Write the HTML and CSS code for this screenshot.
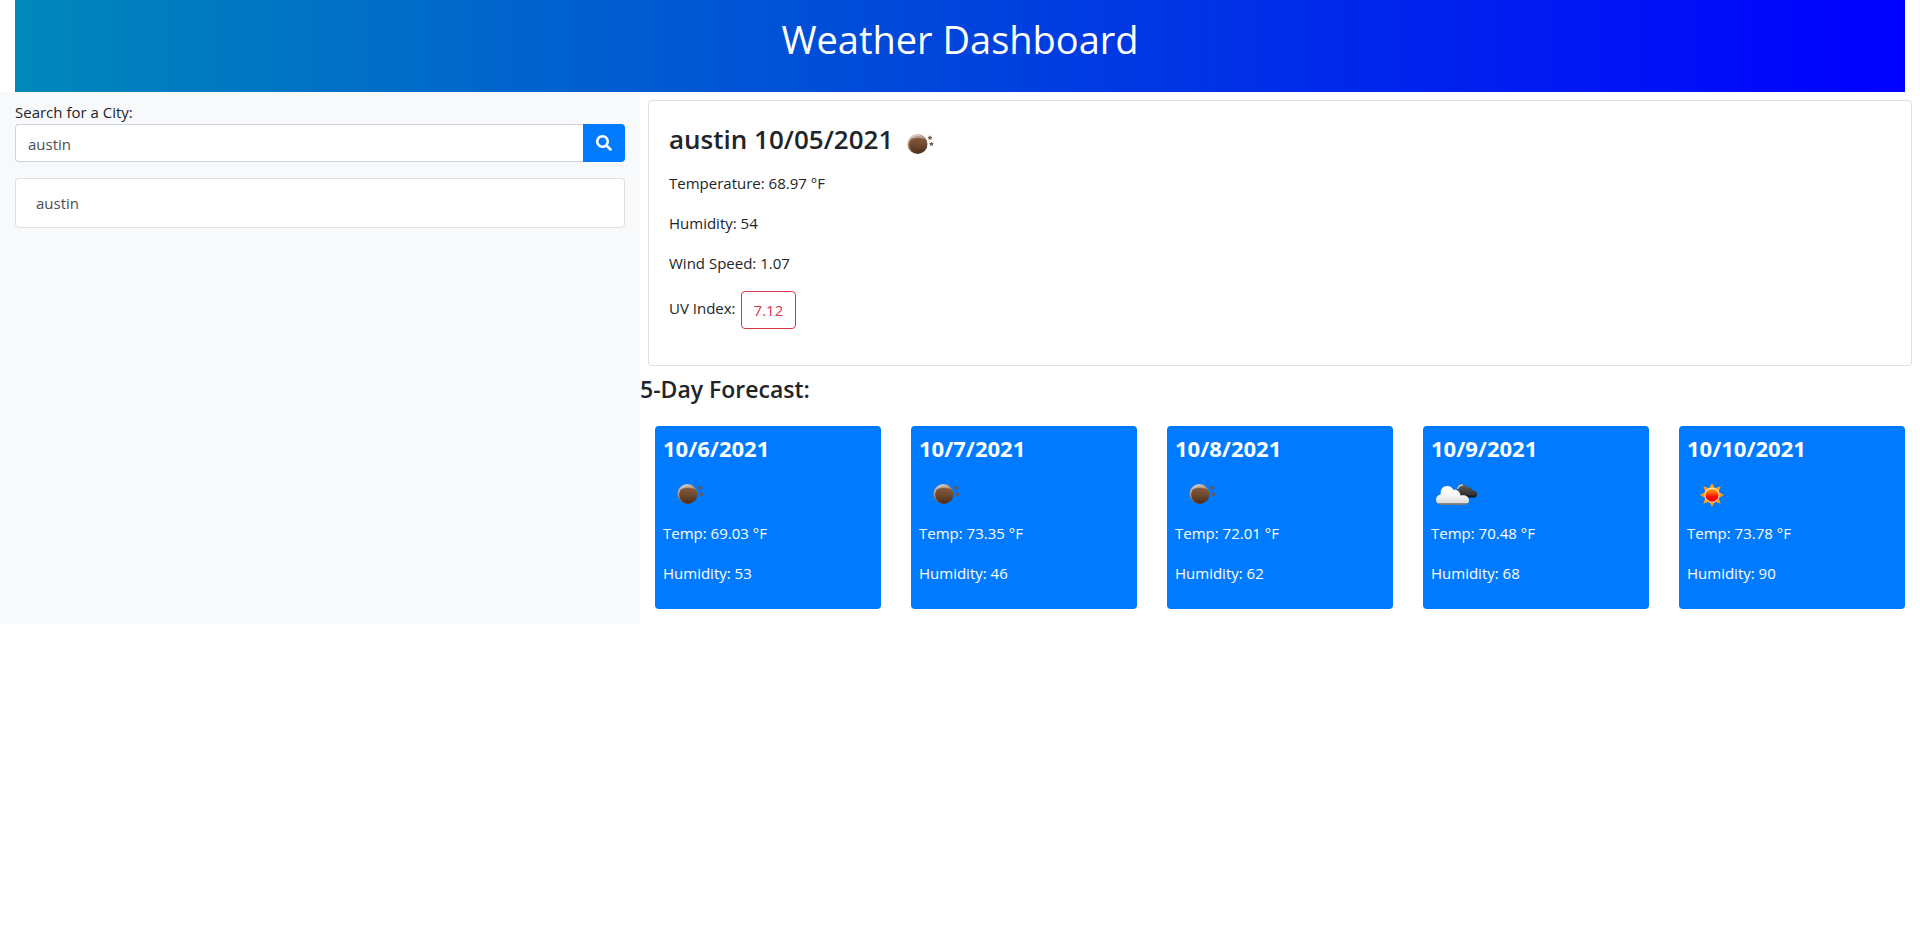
FILE: index.html
```html
<!DOCTYPE html>
<html lang="en">
<head>
<meta charset="utf-8">
<meta name="viewport" content="width=device-width, initial-scale=1">
<title>Weather Dashboard</title>
<link rel="stylesheet" href="styles.css">
</head>
<body>
<svg class="defs" aria-hidden="true">
  <defs>
    <linearGradient id="moonFill" x1="0" y1="0" x2="0" y2="1">
      <stop offset="0" stop-color="#8a6046"/><stop offset="0.45" stop-color="#744c31"/><stop offset="1" stop-color="#4b2f1e"/>
    </linearGradient>
    <linearGradient id="moonRim" x1="0" y1="0" x2="0.6" y2="1">
      <stop offset="0" stop-color="#f3e4dc"/><stop offset="0.45" stop-color="#a98670"/><stop offset="1" stop-color="#4b2f1e"/>
    </linearGradient>
    <linearGradient id="cloudFill" x1="0" y1="0" x2="0" y2="1">
      <stop offset="0" stop-color="#ffffff"/><stop offset="0.5" stop-color="#f7f7f7"/><stop offset="0.88" stop-color="#dcdcdc"/><stop offset="0.93" stop-color="#77797c"/><stop offset="1" stop-color="#77797c"/>
    </linearGradient>
    <linearGradient id="darkFill" x1="0" y1="0" x2="0" y2="1">
      <stop offset="0" stop-color="#6a6a6a"/><stop offset="0.4" stop-color="#484848"/><stop offset="0.8" stop-color="#333333"/><stop offset="1" stop-color="#080808"/>
    </linearGradient>
    <linearGradient id="sunFill" x1="0" y1="0" x2="0" y2="1">
      <stop offset="0" stop-color="#ffb000"/><stop offset="0.4" stop-color="#ff4a00"/><stop offset="0.6" stop-color="#ff0a00"/><stop offset="1" stop-color="#f50000"/>
    </linearGradient>
    <symbol id="moon" viewBox="0 0 50 50">
      <circle cx="24.500" cy="25" r="10" fill="url(#moonRim)"/>
      <circle cx="25" cy="25.500" r="8.800" fill="url(#moonFill)"/>
      <path d="M17 20.500Q24.500 11.500 32 20Q24.500 17.800 17 20.500Z" fill="#fff" opacity=".4"/>
      <path d="M37 16.200l.8 1.600 1.800.2-1.300 1.200.4 1.800-1.700-.9-1.600.9.300-1.800-1.300-1.200 1.800-.2ZM38.500 22.500l.7 1.500 1.700.2-1.200 1.100.3 1.700-1.500-.8-1.600.8.300-1.700-1.200-1.100 1.700-.2Z" fill="#755543"/>
    </symbol>
    <symbol id="clouds" viewBox="0 0 50 50">
      <path d="M25.500 22.500c0-4.500 2.500-7.500 5.500-7.500 2.500 0 4 1 5.200 3.200 2.500-.7 4.800.8 5.300 3.100 3 0 4.800 1.800 4.800 4 0 2-1.500 3.200-3.500 3.200H30c-3 0-4.500-3-4.500-6Z" fill="url(#darkFill)"/>
      <path d="M26.500 20c1-3 3-4.200 5.300-3.900" fill="none" stroke="#d6d6d6" stroke-width="1.200"/>
      <path d="M10.500 36C7.500 36 5 33.700 5 30.700c0-3 2-5 4.700-5.300C9.200 20.500 12 17 16 17c3 0 5.200 1.500 6.500 4 3.400-1 6.500 1.500 7 5.500 4.500-1 8.500 1 8.500 4.800 0 2.900-2 4.700-5 4.700Z" fill="url(#cloudFill)"/>
    </symbol>
    <symbol id="sun" viewBox="0 0 50 50">
      <path d="M25 14l2.900 5.200 5.800-1.900-1.900 5.800L37 26l-5.200 2.900 1.900 5.800-5.800-1.900L25 38l-2.900-5.200-5.800 1.900 1.900-5.800L13 26l5.200-2.900-1.900-5.800 5.800 1.900Z" fill="#ff9c12"/>
      <circle cx="25" cy="26" r="7.500" fill="#ffe9c4"/>
      <circle cx="25" cy="26.200" r="6.500" fill="url(#sunFill)"/>
    </symbol>
  </defs>
</svg>

<header class="banner"><h1>Weather Dashboard</h1></header>

<div class="layout">
  <aside class="sidebar">
    <form class="search">
      <label for="city">Search for a City:</label>
      <div class="search-row">
        <input id="city" type="text" value="austin">
        <button type="button" aria-label="Search">
          <svg viewBox="0 0 512 512" aria-hidden="true"><path fill="currentColor" d="M505 442.700L405.300 343c-4.500-4.500-10.600-7-17-7H372c27.600-35.300 44-79.700 44-128C416 93.100 322.900 0 208 0S0 93.100 0 208s93.100 208 208 208c48.300 0 92.700-16.400 128-44v16.300c0 6.400 2.500 12.500 7 17l99.700 99.700c9.400 9.400 24.600 9.400 33.900 0l28.300-28.300c9.400-9.400 9.400-24.600.1-34zM208 336c-70.700 0-128-57.200-128-128 0-70.700 57.200-128 128-128 70.700 0 128 57.200 128 128 0 70.700-57.200 128-128 128z"/></svg>
        </button>
      </div>
    </form>
    <ul class="history"><li>austin</li></ul>
  </aside>

  <main>
    <section class="current">
      <h2>austin 10/05/2021 <svg class="weather" role="img" aria-label="Clear night"><use href="#moon"/></svg></h2>
      <p>Temperature: 68.97 °F</p>
      <p>Humidity: 54</p>
      <p>Wind Speed: 1.07</p>
      <p class="uv">UV Index: <button type="button">7.12</button></p>
    </section>
    <h3>5-Day Forecast:</h3>
    <section class="forecast">
      <article class="day"><h4>10/6/2021</h4><svg class="weather" role="img" aria-label="Clear night"><use href="#moon"/></svg><p>Temp: 69.03 °F</p><p>Humidity: 53</p></article>
      <article class="day"><h4>10/7/2021</h4><svg class="weather" role="img" aria-label="Clear night"><use href="#moon"/></svg><p>Temp: 73.35 °F</p><p>Humidity: 46</p></article>
      <article class="day"><h4>10/8/2021</h4><svg class="weather" role="img" aria-label="Clear night"><use href="#moon"/></svg><p>Temp: 72.01 °F</p><p>Humidity: 62</p></article>
      <article class="day"><h4>10/9/2021</h4><svg class="weather" role="img" aria-label="Broken clouds"><use href="#clouds"/></svg><p>Temp: 70.48 °F</p><p>Humidity: 68</p></article>
      <article class="day"><h4>10/10/2021</h4><svg class="weather" role="img" aria-label="Clear sky"><use href="#sun"/></svg><p>Temp: 73.78 °F</p><p>Humidity: 90</p></article>
    </section>
  </main>
</div>
</body>
</html>
```
FILE: styles.css
```css
*, *::before, *::after { box-sizing: border-box; }

body {
  margin: 0;
  background: #fff;
  color: #212529;
  font-family: "Segoe UI", "Open Sans", "Noto Sans", sans-serif;
  font-size: 15px;
  line-height: 24px;
}

h1, h2, h3, h4, p, ul { margin: 0; padding: 0; }
button, input { font: inherit; }
.defs { position: absolute; width: 0; height: 0; }

.banner {
  margin: 0 15px;
  padding: 16px 16px 30px;
  background: linear-gradient(to right, #0088bb, #0000ff);
  color: #fff;
  text-align: center;
}
.banner h1 { font-size: 38px; font-weight: 400; line-height: 46px; }

.layout { display: grid; grid-template-columns: 1fr 2fr; }

.sidebar { padding: 8px 15px; background: #f8f9fa; }
.search label { display: block; }
.search-row { display: flex; }
.search-row input {
  flex: 1;
  min-width: 0;
  height: 38px;
  padding: 7px 12px 5px;
  border: 1px solid #ced4da;
  border-right: 0;
  border-radius: 4px 0 0 4px;
  background: #fff;
  color: #495057;
}
.search-row button {
  display: flex;
  align-items: center;
  justify-content: center;
  width: 42px;
  padding: 0;
  border: 0;
  border-radius: 0 4px 4px 0;
  background: #007bff;
  color: #fff;
}
.search-row svg { width: 16px; height: 16px; }

.history { margin-top: 16px; list-style: none; }
.history li {
  padding: 12px 20px;
  border: 1px solid #dfdfdf;
  border-radius: 4px;
  background: #fff;
  color: #495057;
}

main { min-width: 0; }
.current {
  margin: 8px;
  padding: 18px 20px 20px;
  border: 1px solid #dfdfdf;
  border-radius: 4px;
}
.current h2 {
  display: flex;
  align-items: flex-start;
  height: 50px;
  margin-bottom: 2px;
  font-size: 26px;
  font-weight: 600;
  line-height: 40px;
}
.current p { margin-bottom: 16px; }
.weather { display: block; width: 50px; height: 50px; }
.current .uv { display: flex; gap: 5px; line-height: 34px; }
.uv button {
  height: 38px;
  padding: 0 12px;
  border: 1px solid #dc3545;
  border-radius: 4px;
  background: transparent;
  color: #dc3545;
}

h3 { font-size: 23px; font-weight: 600; line-height: 30px; }

.forecast {
  display: grid;
  grid-template-columns: repeat(5, 1fr);
  gap: 30px;
  padding: 22px 15px 15px;
}
.day {
  padding: 8px;
  border-radius: 4px;
  background: #007bff;
  color: #fff;
}
.day h4 { margin-bottom: 6px; font-size: 22px; font-weight: 700; line-height: 29px; }
.day .weather { margin-bottom: 2px; }
.day p { margin-bottom: 16px; }
```
